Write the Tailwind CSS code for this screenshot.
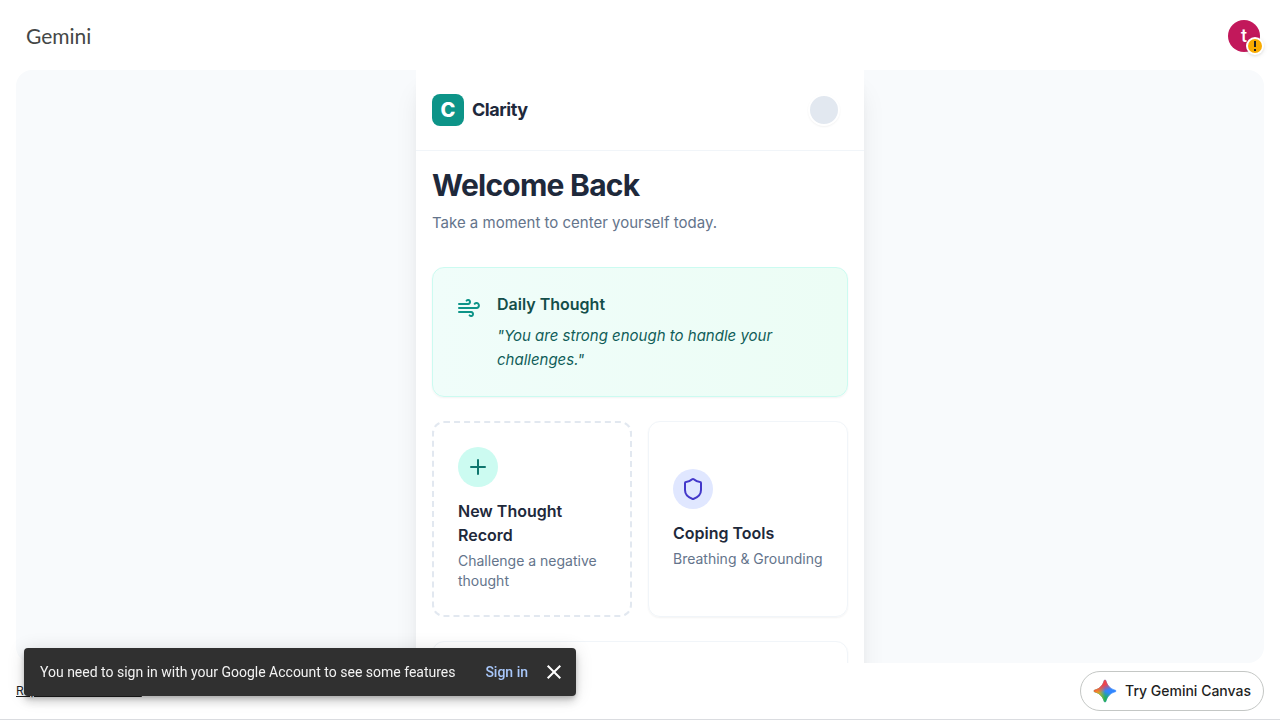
<!DOCTYPE html>
<html lang="en">
<head>
    <meta charset="utf-8">
    <meta name="viewport" content="width=device-width, initial-scale=1">
    <title>Gemini</title>
    <script src="https://cdn.jsdelivr.net/npm/@tailwindcss/browser@4"></script>
</head>
<body class="h-screen flex flex-col overflow-hidden bg-white border-b border-[#dadce0] font-[Inter,sans-serif]">
    <header class="h-[70px] pt-0.5 shrink-0 flex items-center justify-between pl-[26px] pr-5">
        <a href="#" class="font-[Lato,sans-serif] text-[21px] leading-7 text-[#444746]">Gemini</a>
        <button class="relative size-8 rounded-full bg-[#c2185b] text-white text-lg leading-8 font-[Roboto,sans-serif] font-medium" aria-label="Account">
            t
            <svg class="absolute -right-1 -bottom-[3px] size-[18px] drop-shadow" viewBox="0 0 18 18">
                <circle cx="9" cy="9" r="9" fill="#fff"/>
                <circle cx="9" cy="9" r="7" fill="#f9ab00"/>
                <path d="M8 4h2v6H8zM8 12h2v2H8z" fill="#202124"/>
            </svg>
        </button>
    </header>

    <main class="flex-1 min-h-0 mx-4 rounded-2xl overflow-hidden bg-[#f8fafc]">
        <div class="max-w-md min-h-full mx-auto bg-white shadow-xl text-[#1e293b]">
            <div class="flex items-center justify-between px-4 py-6 border-b border-[#f1f5f9]">
                <div class="flex items-center gap-2">
                    <div class="size-8 rounded-lg bg-[#0d9488] flex items-center justify-center text-white text-xl font-extrabold">C</div>
                    <span class="text-lg font-bold tracking-tight">Clarity</span>
                </div>
                <button class="size-8 mr-2 rounded-full bg-[#e2e8f0] border-2 border-white shadow-xs" aria-label="Profile"></button>
            </div>

            <div class="p-4">
                <h1 class="text-[30px] leading-9 font-bold tracking-tight">Welcome Back</h1>
                <p class="mt-2 text-[15px] leading-6 text-[#64748b]">Take a moment to center yourself today.</p>

                <section class="mt-8 flex gap-4 p-6 rounded-xl border border-[#ccfbf1] bg-linear-to-r from-[#f0fdfa] to-[#ecfdf5] shadow-xs">
                    <svg class="size-6 mt-1 shrink-0" viewBox="0 0 24 24" fill="none" stroke="#0d9488" stroke-width="2" stroke-linecap="round" stroke-linejoin="round">
                        <path d="M17.7 7.7a2.5 2.5 0 1 1 1.8 4.3H2"/>
                        <path d="M9.6 4.6A2 2 0 1 1 11 8H2"/>
                        <path d="M12.6 19.4A2 2 0 1 0 14 16H2"/>
                    </svg>
                    <div>
                        <h2 class="text-base font-semibold text-[#134e4a]">Daily Thought</h2>
                        <p class="mt-2 text-[15px] leading-6 italic text-[#115e59]">"You are strong enough to handle your challenges."</p>
                    </div>
                </section>

                <div class="mt-6 grid grid-cols-2 gap-4">
                    <button class="flex flex-col items-start justify-center p-6 rounded-xl border-2 border-dashed border-[#e2e8f0] text-left">
                        <span class="size-10 rounded-full bg-[#ccfbf1] flex items-center justify-center">
                            <svg class="size-6" viewBox="0 0 24 24" fill="none" stroke="#0f766e" stroke-width="2" stroke-linecap="round">
                                <path d="M5 12h14M12 5v14"/>
                            </svg>
                        </span>
                        <span class="mt-3 text-base font-semibold">New Thought Record</span>
                        <span class="mt-1 text-sm text-[#64748b]">Challenge a negative thought</span>
                    </button>
                    <button class="flex flex-col items-start justify-center p-6 rounded-xl border border-[#f1f5f9] shadow-xs text-left">
                        <span class="size-10 rounded-full bg-[#e0e7ff] flex items-center justify-center">
                            <svg class="size-6" viewBox="0 0 24 24" fill="none" stroke="#4338ca" stroke-width="2" stroke-linecap="round" stroke-linejoin="round">
                                <path d="M20 13c0 5-3.5 7.5-7.66 8.95a1 1 0 0 1-.67-.01C7.5 20.5 4 18 4 13V6a1 1 0 0 1 1-1c2 0 4.5-1.2 6.24-2.72a1.17 1.17 0 0 1 1.52 0C14.51 3.81 17 5 19 5a1 1 0 0 1 1 1z"/>
                            </svg>
                        </span>
                        <span class="mt-3 text-base font-semibold">Coping Tools</span>
                        <span class="mt-1 text-sm text-[#64748b] whitespace-nowrap">Breathing &amp; Grounding</span>
                    </button>
                </div>

                <section class="mt-6 h-32 rounded-xl border border-[#f1f5f9] shadow-xs"></section>
            </div>
        </div>
    </main>

    <footer class="h-14 shrink-0 flex items-center justify-between px-4">
        <a href="#" class="text-xs text-[#1f1f1f] underline">Report unsafe content</a>
        <button class="h-10 flex items-center gap-2 px-3 rounded-full border border-[#c4c7c5] bg-white text-sm font-medium text-[#1f1f1f]">
            <svg class="size-6" viewBox="0 0 24 24">
                <defs>
                    <linearGradient id="red" x1="9" y1="2" x2="13" y2="12" gradientUnits="userSpaceOnUse">
                        <stop offset=".4" stop-color="#f0434c"/>
                        <stop offset="1" stop-color="#f0434c" stop-opacity="0"/>
                    </linearGradient>
                    <linearGradient id="yellow" x1="2" y1="12" x2="12" y2="12" gradientUnits="userSpaceOnUse">
                        <stop offset=".2" stop-color="#fbbc04"/>
                        <stop offset="1" stop-color="#fbbc04" stop-opacity="0"/>
                    </linearGradient>
                    <linearGradient id="green" x1="9" y1="21" x2="13" y2="12" gradientUnits="userSpaceOnUse">
                        <stop offset=".3" stop-color="#20b15a"/>
                        <stop offset="1" stop-color="#20b15a" stop-opacity="0"/>
                    </linearGradient>
                    <path id="spark" d="M12 1c.4 0 .7.3.8.7C14 6.500 17.500 10 22.300 11.200c.4.1.7.4.7.8s-.3.7-.7.8C17.500 14 14 17.500 12.800 22.300c-.1.4-.4.7-.8.7s-.7-.3-.8-.7C10 17.500 6.500 14 1.700 12.800 1.300 12.700 1 12.400 1 12s.3-.7.7-.8C6.500 10 10 6.500 11.200 1.700c.1-.4.4-.7.8-.7z"/>
                </defs>
                <g stroke-linejoin="round">
                    <use href="#spark" fill="#3186ff" stroke="#3186ff" stroke-width=".6"/>
                    <use href="#spark" fill="url(#green)" stroke="url(#green)" stroke-width=".6"/>
                    <use href="#spark" fill="url(#yellow)" stroke="url(#yellow)" stroke-width=".6"/>
                    <use href="#spark" fill="url(#red)" stroke="url(#red)" stroke-width=".6"/>
                </g>
            </svg>
            Try Gemini Canvas
        </button>
    </footer>

    <div class="fixed left-6 bottom-6 w-[552px] h-12 flex items-center pl-4 pr-2 rounded bg-[#303030] text-sm text-[#f2f2f2] font-[Roboto,sans-serif] shadow-[0_3px_5px_-1px_rgba(0,0,0,0.2),0_6px_10px_0_rgba(0,0,0,0.14),0_1px_18px_0_rgba(0,0,0,0.12)]" role="status">
        <span>You need to sign in with your Google Account to see some features</span>
        <a href="#" class="ml-auto font-medium text-[#a8c7fa]">Sign in</a>
        <button class="ml-3 size-7 flex items-center justify-center" aria-label="Close">
            <svg class="size-6" viewBox="0 0 24 24" fill="none" stroke="#fff" stroke-width="2">
                <path d="M5.7 5.7l12.6 12.6M18.3 5.7L5.7 18.3"/>
            </svg>
        </button>
    </div>
</body>
</html>
